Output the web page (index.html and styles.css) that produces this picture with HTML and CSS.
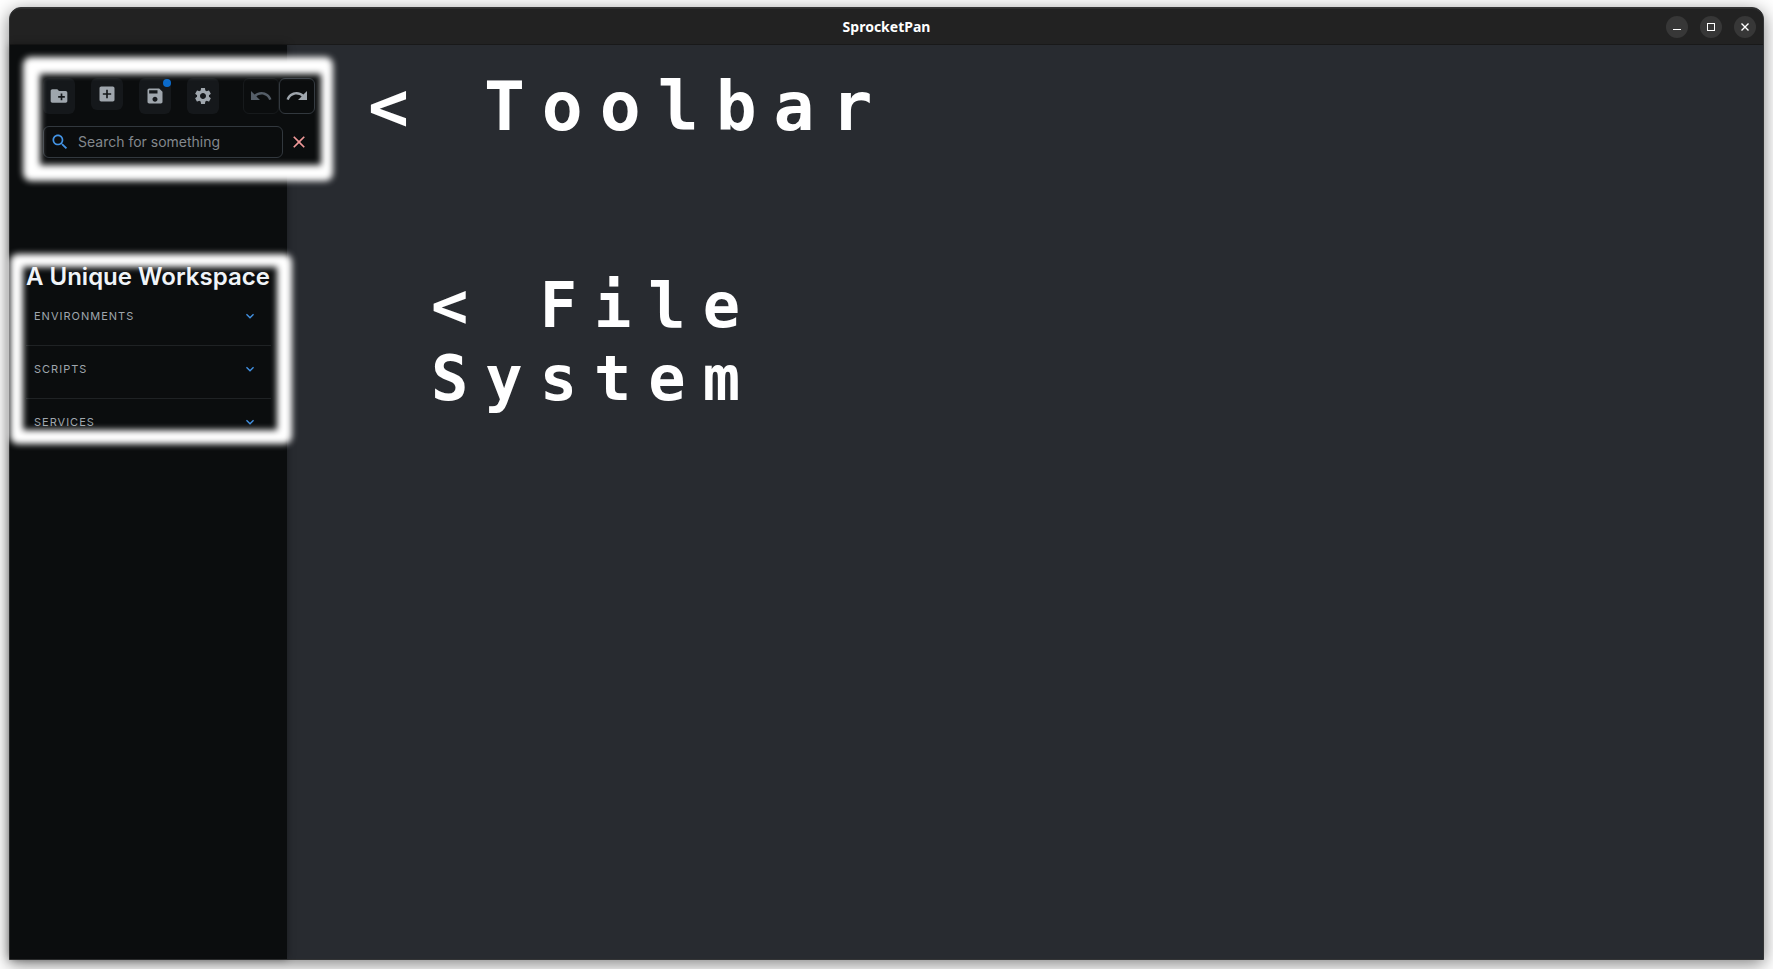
FILE: index.html
```html
<!DOCTYPE html>
<html lang="en">
<head>
<meta charset="utf-8">
<title>SprocketPan</title>
<link rel="stylesheet" href="styles.css">
</head>
<body>
<div class="window">
  <header class="titlebar">
    <h1 class="titlebar-name">SprocketPan</h1>
    <div class="window-controls">
      <button class="window-button" type="button" aria-label="Minimize"><svg width="22" height="22" viewBox="0 0 22 22"><path d="M7 13.5h8" stroke="currentColor"/></svg></button>
      <button class="window-button" type="button" aria-label="Maximize"><svg width="22" height="22" viewBox="0 0 22 22"><rect x="7.500" y="7.500" width="7" height="7" fill="none" stroke="currentColor"/></svg></button>
      <button class="window-button" type="button" aria-label="Close"><svg width="22" height="22" viewBox="0 0 22 22"><path d="M7.500 7.500l7 7m0-7l-7 7" stroke="currentColor" stroke-width="1.400"/></svg></button>
    </div>
  </header>
  <div class="content">
    <aside class="sidebar">
      <section class="callout callout-toolbar" aria-label="Toolbar">
        <div class="tools">
          <button class="tool" type="button" aria-label="New folder"><svg class="icon" viewBox="0 0 24 24"><path d="M20 6h-8l-2-2H4c-1.110 0-1.990.890-1.990 2L2 18c0 1.110.890 2 2 2h16c1.110 0 2-.890 2-2V8c0-1.110-.890-2-2-2zm-1 8h-3v3h-2v-3h-3v-2h3V9h2v3h3v2z"/></svg></button>
          <button class="tool tool-short" type="button" aria-label="Add"><svg class="icon" viewBox="0 0 24 24"><path d="M19 3H5c-1.110 0-2 .9-2 2v14c0 1.100.890 2 2 2h14c1.100 0 2-.9 2-2V5c0-1.100-.9-2-2-2zm-2 10h-4v4h-2v-4H7v-2h4V7h2v4h4v2z"/></svg></button>
          <button class="tool" type="button" aria-label="Save, unsaved changes"><svg class="icon" viewBox="0 0 24 24"><path d="M17 3H5c-1.110 0-2 .9-2 2v14c0 1.100.890 2 2 2h14c1.100 0 2-.9 2-2V7l-4-4zm-5 16c-1.660 0-3-1.340-3-3s1.340-3 3-3 3 1.340 3 3-1.340 3-3 3zm3-10H5V5h10v4z"/></svg><span class="badge"></span></button>
          <button class="tool" type="button" aria-label="Settings"><svg class="icon" viewBox="0 0 24 24"><path d="M19.140 12.940c.040-.3.060-.610.060-.940 0-.320-.020-.640-.070-.940l2.030-1.580c.180-.140.230-.410.120-.610l-1.920-3.320c-.120-.220-.370-.290-.590-.220l-2.390.960c-.5-.380-1.030-.7-1.620-.940l-.360-2.540c-.040-.240-.240-.410-.480-.410h-3.840c-.240 0-.430.170-.470.410l-.360 2.540c-.590.240-1.130.570-1.620.940l-2.390-.960c-.220-.080-.470 0-.590.220L2.740 8.870c-.120.210-.080.470.120.610l2.030 1.580c-.050.3-.090.630-.090.940s.020.640.070.940l-2.030 1.580c-.180.140-.230.410-.120.610l1.920 3.320c.120.220.370.290.590.220l2.390-.960c.5.380 1.030.7 1.620.940l.360 2.540c.050.240.240.410.480.410h3.840c.240 0 .440-.170.470-.410l.360-2.540c.590-.240 1.130-.560 1.620-.940l2.390.960c.220.080.470 0 .590-.220l1.920-3.320c.120-.220.070-.470-.120-.610l-2.010-1.580zM12 15.600c-1.980 0-3.600-1.620-3.600-3.600s1.620-3.600 3.600-3.600 3.600 1.620 3.600 3.600-1.620 3.600-3.600 3.600z"/></svg></button>
          <div class="history">
            <button class="tool tool-history" type="button" aria-label="Undo" disabled><svg class="icon icon-large" viewBox="0 0 24 24"><path d="M12.500 8c-2.650 0-5.050.990-6.900 2.600L2 7v9h9l-3.620-3.620c1.390-1.160 3.160-1.880 5.120-1.880 3.540 0 6.550 2.310 7.600 5.500l2.370-.780C21.080 11.030 17.150 8 12.500 8z"/></svg></button>
            <button class="tool tool-history" type="button" aria-label="Redo"><svg class="icon icon-large" viewBox="0 0 24 24"><path d="M18.400 10.600C16.550 8.990 14.150 8 11.500 8c-4.650 0-8.580 3.030-9.960 7.220L3.900 16c1.050-3.190 4.050-5.500 7.600-5.500 1.950 0 3.730.720 5.120 1.880L13 16h9V7l-3.600 3.600z"/></svg></button>
          </div>
        </div>
        <div class="search-row">
          <label class="search">
            <svg class="icon icon-search" viewBox="0 0 24 24"><path d="M15.500 14h-.790l-.280-.270C15.410 12.590 16 11.110 16 9.500 16 5.910 13.090 3 9.500 3S3 5.910 3 9.500 5.910 16 9.500 16c1.610 0 3.090-.590 4.230-1.570l.270.280v.790l5 4.990L20.490 19l-4.990-5zm-6 0C7.010 14 5 11.990 5 9.500S7.010 5 9.500 5 14 7.010 14 9.500 11.990 14 9.500 14z"/></svg>
            <input class="search-input" type="text" placeholder="Search for something" aria-label="Search">
          </label>
          <button class="clear" type="button" aria-label="Clear search"><svg class="icon" viewBox="0 0 24 24"><path d="M19 6.410 17.590 5 12 10.590 6.410 5 5 6.410 10.590 12 5 17.590 6.410 19 12 13.410 17.590 19 19 17.590 13.410 12z"/></svg></button>
        </div>
      </section>
      <section class="callout callout-files">
        <h2 class="workspace">A Unique Workspace</h2>
        <button class="group" type="button">ENVIRONMENTS<svg class="icon icon-chevron" viewBox="0 0 24 24"><path d="M7.410 8.590 12 13.170l4.590-4.580L18 10l-6 6-6-6z"/></svg></button>
        <button class="group" type="button">SCRIPTS<svg class="icon icon-chevron" viewBox="0 0 24 24"><path d="M7.410 8.590 12 13.170l4.590-4.580L18 10l-6 6-6-6z"/></svg></button>
        <button class="group" type="button">SERVICES<svg class="icon icon-chevron" viewBox="0 0 24 24"><path d="M7.410 8.590 12 13.170l4.590-4.580L18 10l-6 6-6-6z"/></svg></button>
      </section>
    </aside>
    <main class="notes">
      <p class="note note-toolbar">&lt; Toolbar</p>
      <p class="note note-files">&lt; File<br>System</p>
    </main>
  </div>
</div>
</body>
</html>
```
FILE: styles.css
```css
* { box-sizing: border-box; }

body {
  margin: 0;
  min-height: 100vh;
  display: flex;
  padding: 7px 9px 9px;
  background: #fff;
  font-family: Inter, sans-serif;
}

button {
  margin: 0;
  padding: 0;
  border: 0;
  background: none;
  color: inherit;
  font: inherit;
}

.window {
  flex: 1;
  display: flex;
  flex-direction: column;
  border: 1px solid #333435;
  border-radius: 12px 12px 0 0;
  background: #282b30;
  box-shadow: 0 4px 18px rgba(0, 0, 0, 0.5);
}

.titlebar {
  display: grid;
  grid-template-columns: 1fr auto 1fr;
  align-items: center;
  height: 37px;
  border-top: 1px solid #2f2f2f;
  border-bottom: 1px solid #191919;
  border-radius: 11px 11px 0 0;
  background: #222;
  color: #fff;
}

.titlebar-name {
  grid-column: 2;
  margin: 0;
  font: bold 14px/20px "Noto Sans", sans-serif;
}

.window-controls {
  display: flex;
  justify-content: flex-end;
  gap: 12px;
  padding-right: 7px;
}

.window-button {
  width: 22px;
  height: 22px;
  border-radius: 50%;
  background: #373737;
}

.window-button svg { display: block; }

.content {
  flex: 1;
  display: grid;
  grid-template-columns: 277px 1fr;
}

.sidebar {
  position: relative;
  padding-top: 12px;
  background: #0b0d0e;
  box-shadow: 0 0 8px rgba(0, 0, 0, 0.4);
}

/* A soft white frame drawn round a group of controls */
.callout { position: relative; }

.callout::before {
  content: "";
  position: absolute;
  inset: 8px;
  background: #0b0d0e;
}

.callout::after {
  content: "";
  position: absolute;
  inset: 0;
  border: 16px solid #fff;
  border-radius: 8px;
  filter: blur(3px);
  pointer-events: none;
}

.callout > * { position: relative; }

.callout-toolbar {
  width: 310px;
  margin-left: 13px;
  padding: 21px 18px 23px 20px;
}

.callout-toolbar::after { border-width: 17px 12px 16px 17px; }

.callout-files {
  width: 282px;
  margin-top: 73px;
  padding: 7px 21px 13px 16px;
}

.callout-files::after { border-width: 13px 15px 14px 13px; }

.tools {
  display: flex;
  align-items: flex-start;
  gap: 16px;
}

.tool {
  position: relative;
  display: flex;
  align-items: center;
  justify-content: center;
  width: 32px;
  height: 36px;
  border-radius: 6px;
  background: #15181b;
  color: #9fa6ad;
}

.tool-short { height: 32px; }

.history {
  display: flex;
  margin-left: 8px;
}

.tool-history {
  width: 36px;
  border: 1px solid #32383e;
  background: none;
}

.tool-history:disabled {
  border-color: #171a1c;
  color: #555e68;
}

.badge {
  position: absolute;
  top: 1px;
  right: 0;
  width: 8px;
  height: 8px;
  border-radius: 50%;
  background: #0b6bcb;
}

.icon {
  display: block;
  flex: none;
  width: 20px;
  height: 20px;
  fill: currentColor;
}

.icon-large {
  width: 24px;
  height: 24px;
}

.search-row {
  display: flex;
  margin-top: 12px;
}

.search {
  display: flex;
  align-items: center;
  gap: 8px;
  width: 240px;
  height: 32px;
  padding: 0 6px;
  border: 1px solid #32383e;
  border-radius: 6px;
}

.icon-search { color: #4393e4; }

.search-input {
  flex: 1;
  min-width: 0;
  padding: 0;
  border: 0;
  outline: 0;
  background: none;
  color: #cdd7e1;
  font: 14px/20px Inter, sans-serif;
}

.search-input::placeholder {
  color: #83888d;
  opacity: 1;
}

.clear {
  display: flex;
  align-items: center;
  justify-content: center;
  width: 32px;
  color: #f09898;
}

.workspace {
  margin: 0;
  color: #f0f4f8;
  font-size: 24px;
  font-weight: 600;
  line-height: 32px;
  white-space: nowrap;
}

.group {
  display: flex;
  align-items: center;
  justify-content: space-between;
  width: 100%;
  padding: 14px 13px 20px 8px;
  border-bottom: 1px solid #1f2224;
  color: #9fa6ad;
  font-size: 11px;
  line-height: 18px;
  letter-spacing: 1px;
}

.group:last-child {
  padding-bottom: 0;
  border-bottom: 0;
}

.icon-chevron {
  width: 16px;
  height: 16px;
  color: #4393e4;
}

.notes { padding: 22px 81px; }

.note {
  margin: 0;
  color: #fff;
  font-family: "DejaVu Sans Mono", monospace;
  font-weight: bold;
  letter-spacing: 17px;
}

.note-toolbar {
  font-size: 68px;
  line-height: 80px;
}

.note-files {
  margin: 122px 0 0 63px;
  font-size: 62px;
  line-height: 73px;
}
```
